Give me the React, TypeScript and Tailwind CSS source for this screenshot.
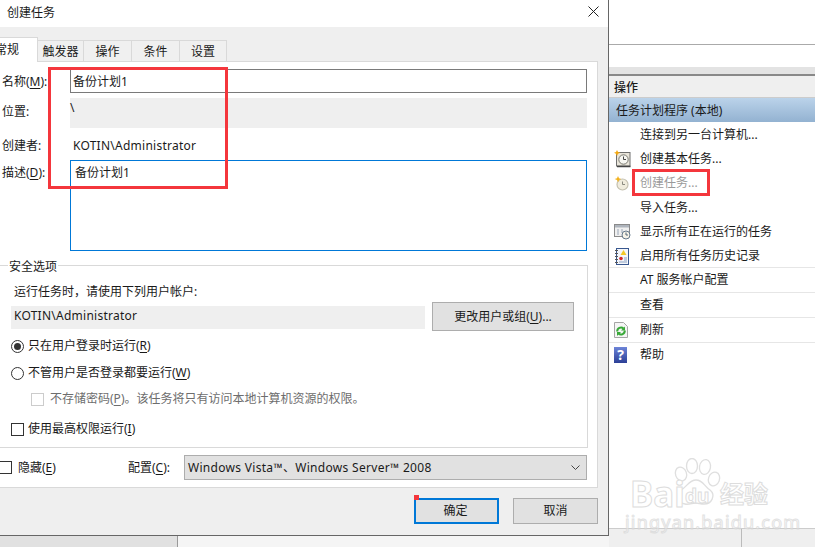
const font = { fontFamily: '"Noto Sans", "Noto Sans CJK SC", sans-serif' };

function U({ children }: { children: React.ReactNode }) {
  return <span className="underline underline-offset-2">{children}</span>;
}

function Radio({ on }: { on?: boolean }) {
  return (
    <span className="flex h-[13px] w-[13px] shrink-0 items-center justify-center rounded-full border border-[#333] bg-white">
      {on && <span className="h-[7px] w-[7px] rounded-full bg-[#333]" />}
    </span>
  );
}

function Check({ disabled }: { disabled?: boolean }) {
  return <span className={`block h-[13px] w-[13px] shrink-0 border bg-white ${disabled ? 'border-[#ccc]' : 'border-[#333]'}`} />;
}

function ClockIcon() {
  return (
    <svg width="17" height="18" viewBox="0 0 17 18">
      <rect x="2.500" y="2.500" width="13.500" height="13.500" fill="#e9e5da" stroke="#6f6f6f" />
      <path d="M3 16.500h13.500" stroke="#444" strokeWidth="1.500" />
      <circle cx="9.500" cy="9.500" r="4.700" fill="#f7f7f2" stroke="#77776f" />
      <path d="M9.500 6.500v3h2.500" fill="none" stroke="#444" />
      <path d="M3 0l1 2 2.300.8L4 3.800 3 6 2 3.800 0 2.800 2 2z" fill="#f5a90f" />
    </svg>
  );
}

function ClockFadedIcon() {
  return (
    <svg width="16" height="16" viewBox="0 0 16 16">
      <circle cx="8.500" cy="9.500" r="5.500" fill="#f0ecdd" stroke="#c4c0b0" strokeWidth="1.200" />
      <path d="M8.500 6.500v3h2.500" fill="none" stroke="#8a8a80" />
      <path d="M4 1l1 2.200 2.300.8L5 5 4 7.200 3 5 .7 4 3 3.200z" fill="#f3b21c" />
    </svg>
  );
}

function RunningIcon() {
  return (
    <svg width="17" height="16" viewBox="0 0 17 16">
      <rect x="0.500" y="0.500" width="15" height="12" fill="#f0f0f0" stroke="#8a8a8a" />
      <rect x="1" y="1" width="14" height="2.500" fill="#aeb4bc" />
      <path d="M3 6h2M7 6h2M3 8h2M7 8h2M3 10h2" stroke="#9aa7b8" />
      <circle cx="12" cy="11" r="4" fill="#f6f3e8" stroke="#65798c" />
      <path d="M12 8.500V11h2" fill="none" stroke="#55697c" />
    </svg>
  );
}

function HistoryIcon() {
  return (
    <svg width="15" height="17" viewBox="0 0 15 17">
      <rect x="2.500" y="0.500" width="12" height="16" fill="#f4f6fa" stroke="#38578f" />
      <path d="M1 2.500h3M1 5.500h3M1 8.500h3M1 11.500h3M1 14.500h3" stroke="#555" />
      <path d="M9.500 2l3 5h-6z" fill="#f3c928" />
      <circle cx="7" cy="10.500" r="1.800" fill="#d42a2a" />
      <path d="M10 10h3M10 12h3M5 14h8" stroke="#8aa0c0" />
    </svg>
  );
}

function RefreshIcon() {
  return (
    <svg width="14" height="16" viewBox="0 0 14 16">
      <path d="M.5.500h9l4 4v11H.500z" fill="#f5f5f5" stroke="#a5a5a5" />
      <path d="M3.200 9.500a3.800 3.800 0 0 1 6.300-3M10.800 8.500a3.800 3.800 0 0 1-6.300 3" fill="none" stroke="#38a838" strokeWidth="2" />
      <path d="M11 4.500v4H7zM3 14v-4h4z" fill="#38a838" />
    </svg>
  );
}

function HelpIcon() {
  return (
    <span className="flex h-[16px] w-[13px] items-center justify-center bg-gradient-to-b from-[#6d84d8] to-[#2c3f96] text-[14px] font-bold leading-none text-white">
      ?
    </span>
  );
}

function Action({ label, icon, disabled, line }: { label: string; icon?: React.ReactNode; disabled?: boolean; line?: boolean }) {
  return (
    <div className={`flex items-center pl-[5px] ${line ? 'h-[25px] border-t border-[#e6e6e6]' : 'h-[24.200px] pt-[2px]'}`}>
      <span className="flex w-[26px] shrink-0 items-center">{icon}</span>
      <span className={disabled ? 'text-[#9a9a9a]' : 'text-[#1a1a1a]'}>{label}</span>
    </div>
  );
}

function Field({ label, className, children }: { label: React.ReactNode; className: string; children?: React.ReactNode }) {
  return (
    <div className={`flex ${className}`}>
      <span className="w-[68px] shrink-0 pl-[2px]">{label}</span>
      {children}
    </div>
  );
}

function Tab({ label, className }: { label: string; className: string }) {
  return (
    <div className={`mt-[3px] flex h-[21px] items-center justify-center border-r border-t border-[#d9d9d9] bg-[#f0f0f0] pt-[2px] ${className}`}>{label}</div>
  );
}

function Watermark() {
  return (
    <div className="absolute left-[624px] top-[456px] h-[76px] w-[150px] select-none whitespace-nowrap text-white opacity-70">
      <svg width="48" height="50" viewBox="0 0 48 50" className="absolute left-[49px] top-[2px]" fill="#fff" stroke="#d2d2d2" strokeWidth="1.300">
        <ellipse cx="8" cy="16" rx="5.500" ry="7" transform="rotate(-20 8 16)" />
        <ellipse cx="19" cy="8" rx="5.500" ry="7.500" />
        <ellipse cx="32" cy="9" rx="5.500" ry="7.500" transform="rotate(10 32 9)" />
        <ellipse cx="41" cy="21" rx="5.500" ry="7" transform="rotate(20 41 21)" />
        <path d="M23 22c7 0 8 6 14 10 6 5 2 14-6 14-3 0-6-1-9-1s-6 2-10 1C5 45 2 37 8 32c6-3 8-10 15-10z" />
      </svg>
      <span className="absolute left-[6px] top-[20px] text-[35px] font-bold leading-[35px] [-webkit-text-stroke:1px_#cfcfcf]">Bai</span>
      <span className="absolute left-[61px] top-[29px] text-[19px] font-bold leading-[22px] [-webkit-text-stroke:1px_#cfcfcf]">du</span>
      <span className="absolute left-[96px] top-[23px] text-[24px] font-bold leading-[30px] [-webkit-text-stroke:1px_#cfcfcf]">经验</span>
      <span className="absolute left-[1px] top-[56px] text-[18px] leading-[20px] tracking-[1.200px] [-webkit-text-stroke:1px_#d6d6d6]">jingyan.baidu.com</span>
    </div>
  );
}

export default function App() {
  return (
    <div className="relative flex h-[547px] w-[815px] overflow-hidden bg-white text-[12px] leading-[16px] text-[#1a1a1a]" style={font}>
      {/* dialog column */}
      <div className="flex w-[609px] shrink-0 flex-col">
        <div className="flex h-[536px] flex-col border-b border-r border-[#666] bg-[#efefef]">
          <div className="flex h-[27px] items-start justify-between bg-white pl-[7px] pr-[9px] pt-[5px]">
            <span>创建任务</span>
            <svg width="11" height="11" viewBox="0 0 11 11" stroke="#222" fill="none" className="mt-[1px]">
              <path d="M.5.500l10 10M10.500.500l-10 10" />
            </svg>
          </div>

          {/* tabs */}
          <div className="flex pt-[10px]">
            <div className="z-10 mb-[-1px] flex h-[25px] w-[38px] items-center justify-end overflow-hidden border-r border-t border-[#d9d9d9] bg-white pr-[18px]">
              <span className="shrink-0 whitespace-nowrap">常规</span>
            </div>
            <Tab label="触发器" className="w-[46px]" />
            <Tab label="操作" className="w-[48px]" />
            <Tab label="条件" className="w-[48px]" />
            <Tab label="设置" className="w-[47px]" />
          </div>

          {/* general tab */}
          <div className="mr-[10px] h-[427px] border-b border-r border-t border-[#d9d9d9] bg-white">
            <Field label={<span className="mt-[5px] block">名称(<U>M</U>):</span>} className="mt-[7px] h-[24px]">
              <div className="ml-[2px] flex h-[24px] w-[517px] items-center border border-[#7a7a7a] pl-[2px] pt-[2px]">备份计划1</div>
            </Field>
            <Field label={<span className="mt-[6px] block">位置:</span>} className="mt-[5px] h-[30px]">
              <div className="ml-[2px] h-[30px] w-[517px] bg-[#efefef] pt-[2px]">\</div>
            </Field>
            <Field label="创建者:" className="mt-[9px] h-[16px] items-center pt-[2px]">
              <div className="pl-[5px] tracking-[0.250px]">KOTIN\Administrator</div>
            </Field>
            <Field label={<>描述(<U>D</U>):</>} className="mt-[7px] h-[91px] pt-[5px]">
              <div className="mt-[-5px] ml-[2px] h-[91px] w-[517px] border border-[#0078d7] pl-[4px] pt-[4px]">备份计划1</div>
            </Field>

            {/* security group */}
            <div className="relative mr-[9px] mt-[14px] h-[183px] border-b border-r border-t border-[#d9d9d9] pl-[11px] pt-[18px]">
              <span className="absolute left-[8px] top-[-7px] bg-white px-[1px]">安全选项</span>
              <div className="pl-[3px]">运行任务时，请使用下列用户帐户:</div>
              <div className="mt-[2px] flex items-center">
                <div className="mt-[2px] flex h-[23px] w-[414px] items-center bg-[#efefef] pb-[3px] pl-[3px] tracking-[0.250px]">KOTIN\Administrator</div>
                <div className="ml-[7px] flex h-[29px] w-[142px] items-center justify-center border border-[#adadad] bg-[#e1e1e1]">
                  <span>更改用户或组(<U>U</U>)...</span>
                </div>
              </div>
              <div className="mt-[7px] flex h-[16px] items-center gap-[4px]">
                <Radio on />
                <span>只在用户登录时运行(<U>R</U>)</span>
              </div>
              <div className="mt-[11px] flex h-[16px] items-center gap-[4px]">
                <Radio />
                <span>不管用户是否登录都要运行(<U>W</U>)</span>
              </div>
              <div className="mt-[10px] flex h-[16px] items-center gap-[6px] pl-[20px] text-[#6d6d6d]">
                <Check disabled />
                <span>不存储密码(<U>P</U>)。该任务将只有访问本地计算机资源的权限。</span>
              </div>
              <div className="mt-[14px] flex h-[16px] items-center gap-[4px]">
                <Check />
                <span>使用最高权限运行(<U>I</U>)</span>
              </div>
            </div>

            {/* bottom row */}
            <div className="mt-[7px] flex h-[25px] items-center">
              <div className="ml-[-1px] h-[13px] w-[13px] border border-[#333]" />
              <span className="ml-[6px] w-[110px]">隐藏(<U>E</U>)</span>
              <span className="w-[56px]">配置(<U>C</U>):</span>
              <div className="flex h-[25px] w-[403px] items-center justify-between border border-[#adadad] bg-[#e1e1e1] pl-[3px] pr-[6px]">
                <span className="tracking-[0.300px]">Windows Vista™、Windows Server™ 2008</span>
                <svg width="9" height="6" viewBox="0 0 9 6" fill="none" stroke="#444">
                  <path d="M.5.500l4 4 4-4" />
                </svg>
              </div>
            </div>
          </div>

          {/* buttons */}
          <div className="mt-[10px] flex justify-end gap-[14px] pr-[10px]">
            <div className="flex h-[26px] w-[85px] items-center justify-center border-2 border-[#0078d7] bg-[#e1e1e1] pr-[2px]">确定</div>
            <div className="flex h-[26px] w-[85px] items-center justify-center border border-[#adadad] bg-[#e1e1e1]">取消</div>
          </div>
        </div>
        <div className="flex flex-1">
          <div className="w-[178px] border-r border-[#999] bg-[#e1e1e1]" />
          <div className="flex-1 bg-[#f5f5f5]" />
        </div>
      </div>

      {/* actions pane */}
      <div className="flex flex-1 flex-col">
        <div className="h-[45px] shrink-0 border-b border-[#aaa]" />
        <div className="h-[22px] shrink-0" />
        <div className="h-[9px] shrink-0 border-b-2 border-[#888] bg-[#e3e3e3]" />
        <div className="flex h-[22px] shrink-0 items-center border-b border-[#ccc] bg-[#efefef] pl-[5px] pt-[2px] font-medium">操作</div>
        <div className="flex h-[24px] shrink-0 items-center bg-gradient-to-b from-[#bbd3ea] to-[#93b2d1] pl-[7px] pt-[2px]">任务计划程序 (本地)</div>
        <div>
          <Action label="连接到另一台计算机..." />
          <Action label="创建基本任务..." icon={<ClockIcon />} />
          <Action label="创建任务..." icon={<ClockFadedIcon />} disabled />
          <Action label="导入任务..." />
          <Action label="显示所有正在运行的任务" icon={<RunningIcon />} />
          <Action label="启用所有任务历史记录" icon={<HistoryIcon />} />
          <Action label="AT 服务帐户配置" line />
          <Action label="查看" line />
          <Action label="刷新" icon={<RefreshIcon />} line />
          <Action label="帮助" icon={<HelpIcon />} line />
        </div>
        <div className="mt-auto flex h-[19px] shrink-0 border-t border-[#ccc] bg-[#efefef]">
          <div className="w-[133px] border-r border-[#bbb]" />
        </div>
      </div>

      {/* annotations */}
      <div className="absolute left-[48px] top-[67px] h-[122px] w-[180px] border-[3px] border-[#f4363c]" />
      <div className="absolute left-[632px] top-[169px] h-[27px] w-[78px] border-[3px] border-[#f4363c]" />
      <div className="absolute left-[414px] top-[495px] h-[5px] w-[5px] bg-[#f4363c]" />
      <Watermark />
    </div>
  );
}
